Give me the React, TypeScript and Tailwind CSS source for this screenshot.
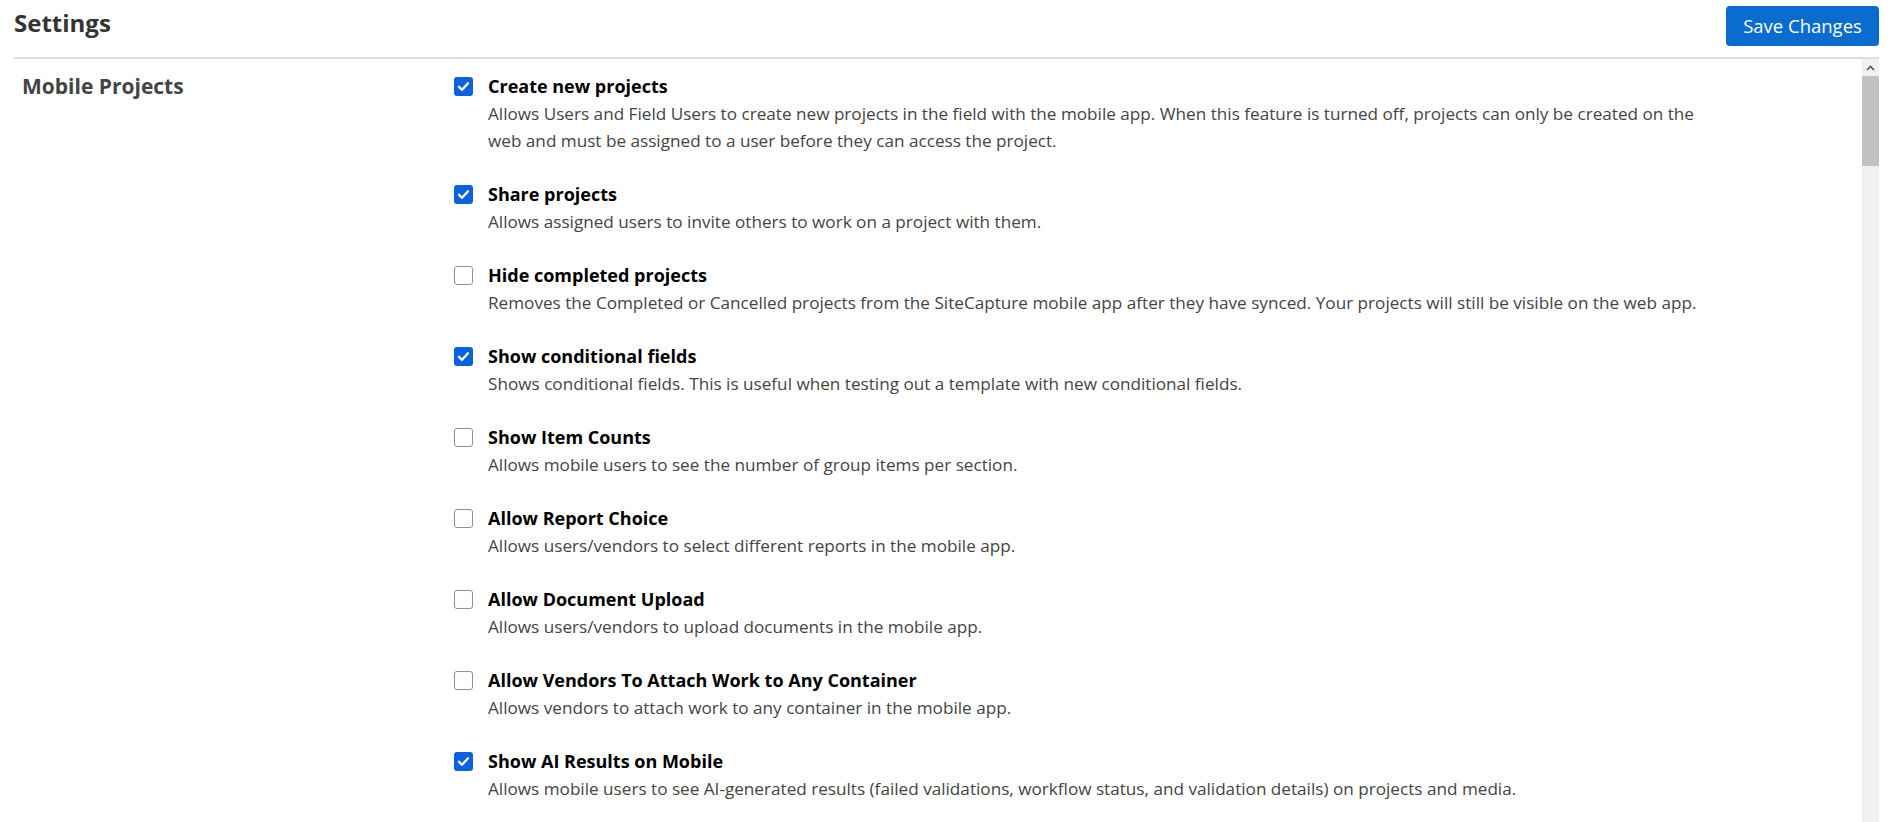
import { useState } from 'react'

type Setting = { id: string; title: string; description: string; checked: boolean }

const initialSettings: Setting[] = [
  { id: 'create', title: 'Create new projects', checked: true, description: 'Allows Users and Field Users to create new projects in the field with the mobile app. When this feature is turned off, projects can only be created on the web and must be assigned to a user before they can access the project.' },
  { id: 'share', title: 'Share projects', checked: true, description: 'Allows assigned users to invite others to work on a project with them.' },
  { id: 'hide', title: 'Hide completed projects', checked: false, description: 'Removes the Completed or Cancelled projects from the SiteCapture mobile app after they have synced. Your projects will still be visible on the web app.' },
  { id: 'conditional', title: 'Show conditional fields', checked: true, description: 'Shows conditional fields. This is useful when testing out a template with new conditional fields.' },
  { id: 'counts', title: 'Show Item Counts', checked: false, description: 'Allows mobile users to see the number of group items per section.' },
  { id: 'report', title: 'Allow Report Choice', checked: false, description: 'Allows users/vendors to select different reports in the mobile app.' },
  { id: 'upload', title: 'Allow Document Upload', checked: false, description: 'Allows users/vendors to upload documents in the mobile app.' },
  { id: 'vendors', title: 'Allow Vendors To Attach Work to Any Container', checked: false, description: 'Allows vendors to attach work to any container in the mobile app.' },
  { id: 'ai', title: 'Show AI Results on Mobile', checked: true, description: 'Allows mobile users to see AI-generated results (failed validations, workflow status, and validation details) on projects and media.' },
]

function Checkbox({ checked, onChange }: { checked: boolean; onChange: () => void }) {
  return (
    <button
      type="button"
      onClick={onChange}
      className={checked
        ? 'flex h-[19px] w-[19px] shrink-0 items-center justify-center rounded-[3px] bg-[#0b62e0]'
        : 'flex h-[19px] w-[19px] shrink-0 items-center justify-center rounded-[3px] border border-[#8f8f9d] bg-white'}
    >
      {checked && (
        <svg width="13" height="13" viewBox="0 0 13 13" fill="none">
          <path d="M2 6.8 L5.1 9.8 L11 3.3" stroke="white" strokeWidth="2.3" strokeLinecap="round" strokeLinejoin="round" />
        </svg>
      )}
    </button>
  )
}

export default function App() {
  const [settings, setSettings] = useState(initialSettings)
  const toggle = (id: string) => setSettings(s => s.map(x => (x.id === id ? { ...x, checked: !x.checked } : x)))

  return (
    <div className="flex h-[822px] flex-col overflow-hidden bg-white px-[14px] font-['Open_Sans',sans-serif]">
      <div className="flex items-start justify-between border-b-2 border-[#dddddd] pt-[6px] pb-[11px]">
        <h1 className="text-[24px] leading-[34px] font-bold text-[#333333]">Settings</h1>
        <button className="h-[40px] w-[153px] rounded-[4px] bg-[#0a6ccf] text-[18.5px] text-white">Save Changes</button>
      </div>
      <div className="flex min-h-0 flex-1">
        <div className="flex min-w-0 flex-1 pt-[14px]">
          <div className="w-[440px] shrink-0 pl-[8px]">
            <h2 className="text-[21px] leading-[27px] font-bold text-[#444444]">Mobile Projects</h2>
          </div>
          <div className="flex flex-col">
            {settings.map(s => (
              <div key={s.id} className="mb-[27px] flex gap-[15px]">
                <div className="flex h-[27px] items-center">
                  <Checkbox checked={s.checked} onChange={() => toggle(s.id)} />
                </div>
                <div>
                  <p className="text-[18px] leading-[27px] font-bold text-black">{s.title}</p>
                  <p className="max-w-[1225px] text-[17.15px] leading-[27px] text-[#444444]">{s.description}</p>
                </div>
              </div>
            ))}
          </div>
        </div>
        <div className="flex w-[17px] shrink-0 flex-col bg-[#f1f1f1]">
          <div className="flex h-[17px] items-center justify-center">
            <svg width="9" height="6" viewBox="0 0 9 6"><path d="M1 5 L4.5 1.5 L8 5" stroke="#505050" strokeWidth="1.6" fill="none" /></svg>
          </div>
          <div className="h-[90px] bg-[#c1c1c1]" />
        </div>
      </div>
    </div>
  )
}
